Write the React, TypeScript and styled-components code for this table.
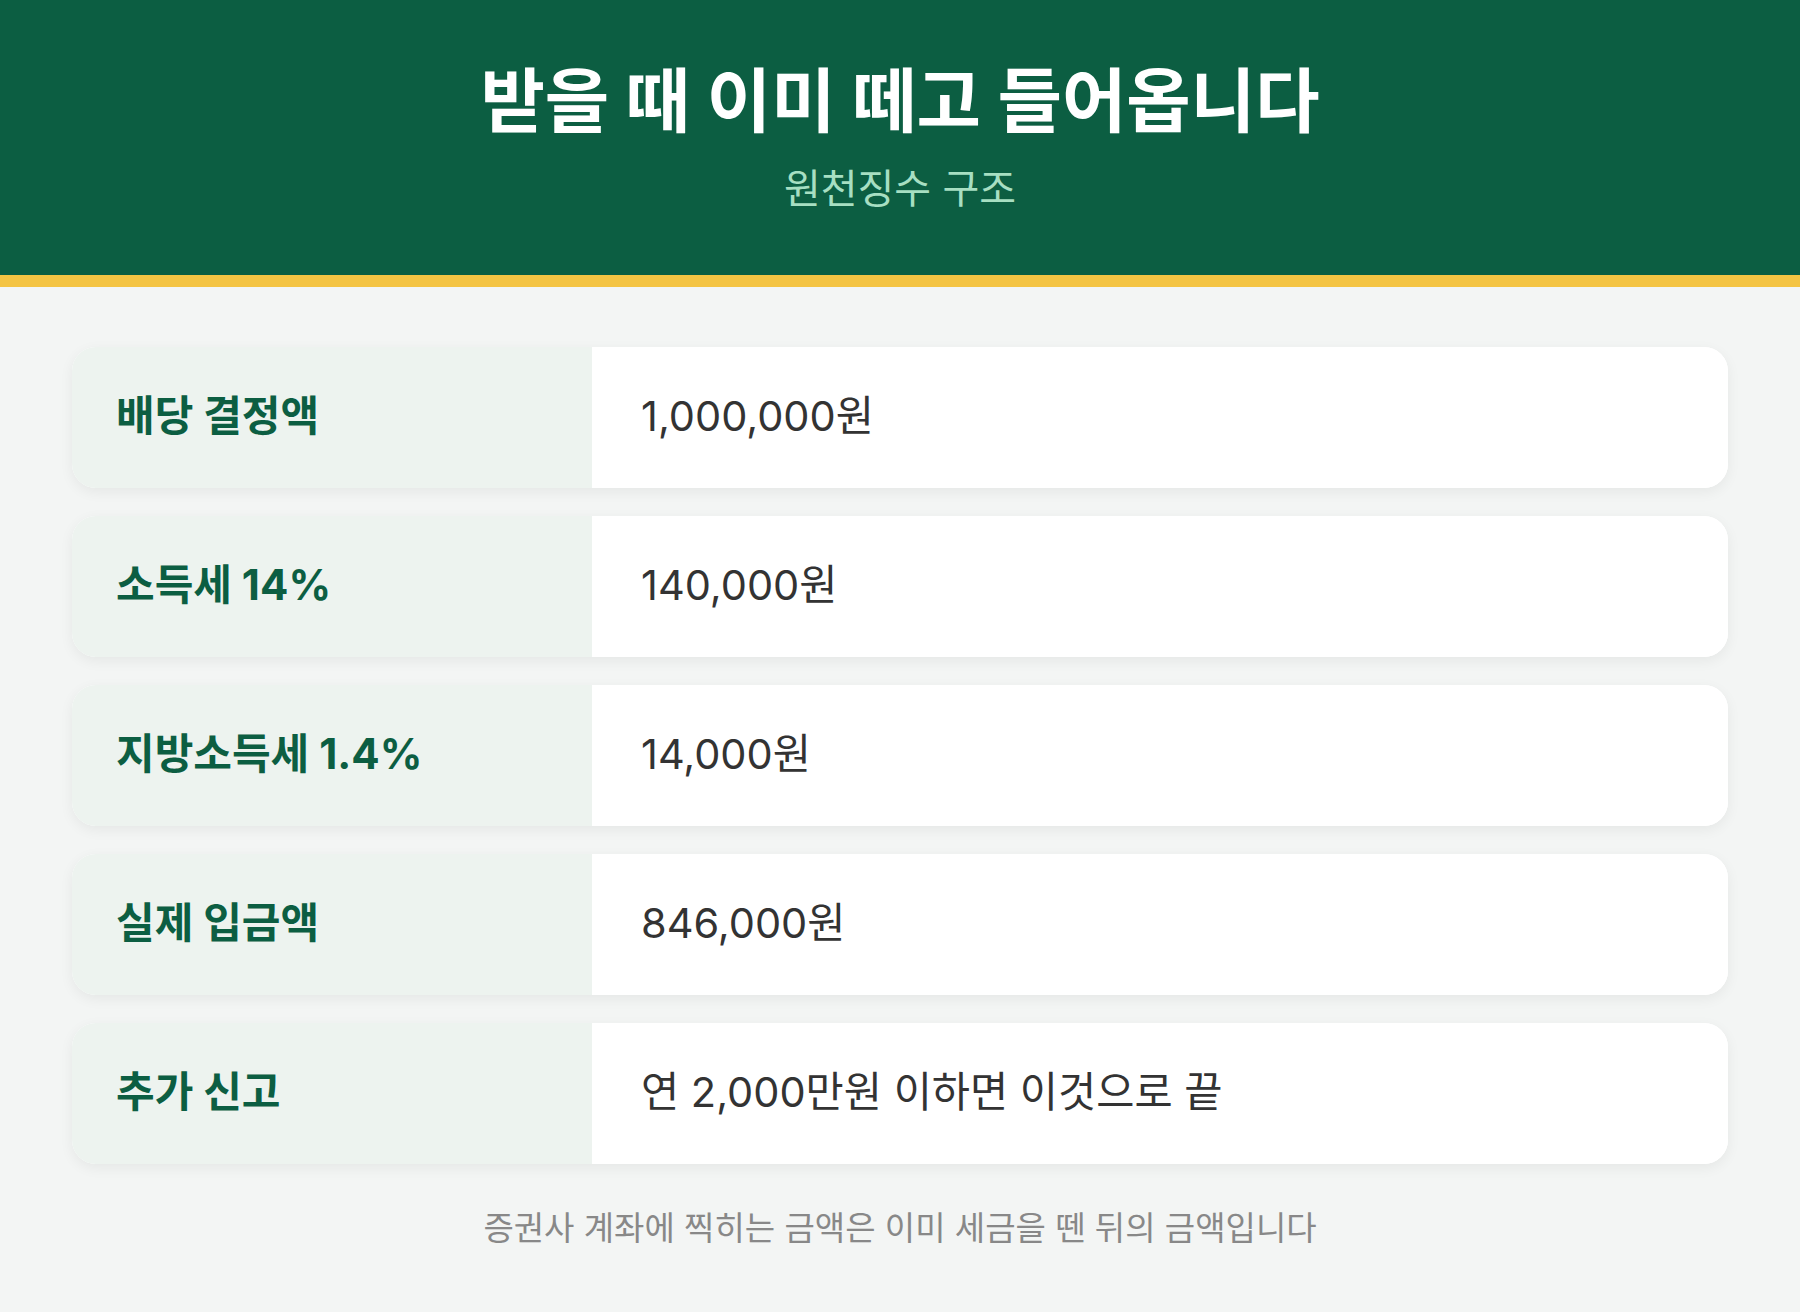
import React from "react";
import styled, { createGlobalStyle } from "styled-components";

const Global = createGlobalStyle`
  html, body { margin: 0; padding: 0; background: #f3f5f4; }
  body { font-family: "Inter", "Noto Sans CJK KR", sans-serif; }
  * { box-sizing: border-box; }
`;

const Page = styled.div`
  width: 1800px;
  min-height: 1312px;
  background: #f3f5f4;
`;

const Header = styled.header`
  background: #0c5e42;
  border-bottom: 12px solid #f4c443;
  padding: 62px 0 0;
  height: 287px;
  display: flex;
  flex-direction: column;
  align-items: center;
`;

const Title = styled.h1`
  margin: 0;
  font-size: 70px;
  line-height: 80px;
  font-weight: 700;
  color: #ffffff;
`;

const Subtitle = styled.p`
  margin: 22px 0 0;
  font-size: 40px;
  line-height: 50px;
  font-weight: 400;
  color: #a7dfc2;
`;

const Main = styled.main`
  padding: 60px 72px 0;
  display: flex;
  flex-direction: column;
  gap: 28px;
`;

const Row = styled.div`
  display: grid;
  grid-template-columns: 520px 1fr;
  height: 141px;
  border-radius: 24px;
  overflow: hidden;
  background: #ffffff;
  box-shadow: 0 4px 14px rgba(0, 0, 0, 0.06);
`;

const Cell = styled.div`
  display: flex;
  align-items: center;
  line-height: 56px;
  padding-bottom: 3px;
`;

const Label = styled(Cell)`
  background: #edf3ef;
  color: #0c5e42;
  font-weight: 700;
  font-size: 42px;
  padding-left: 44px;
`;

const Value = styled(Cell)`
  background: #ffffff;
  color: #333333;
  font-weight: 400;
  font-size: 41.5px;
  padding-left: 49px;
`;

const Footer = styled.p`
  margin: 38px 0 0;
  text-align: center;
  font-size: 33px;
  color: #888888;
`;

const rows: [string, string][] = [
  ["배당 결정액", "1,000,000원"],
  ["소득세 14%", "140,000원"],
  ["지방소득세 1.4%", "14,000원"],
  ["실제 입금액", "846,000원"],
  ["추가 신고", "연 2,000만원 이하면 이것으로 끝"],
];

export default function App() {
  return (
    <Page>
      <Global />
      <Header>
        <Title>받을 때 이미 떼고 들어옵니다</Title>
        <Subtitle>원천징수 구조</Subtitle>
      </Header>
      <Main>
        {rows.map(([l, v]) => (
          <Row key={l}>
            <Label>{l}</Label>
            <Value>{v}</Value>
          </Row>
        ))}
      </Main>
      <Footer>증권사 계좌에 찍히는 금액은 이미 세금을 뗀 뒤의 금액입니다</Footer>
    </Page>
  );
}
